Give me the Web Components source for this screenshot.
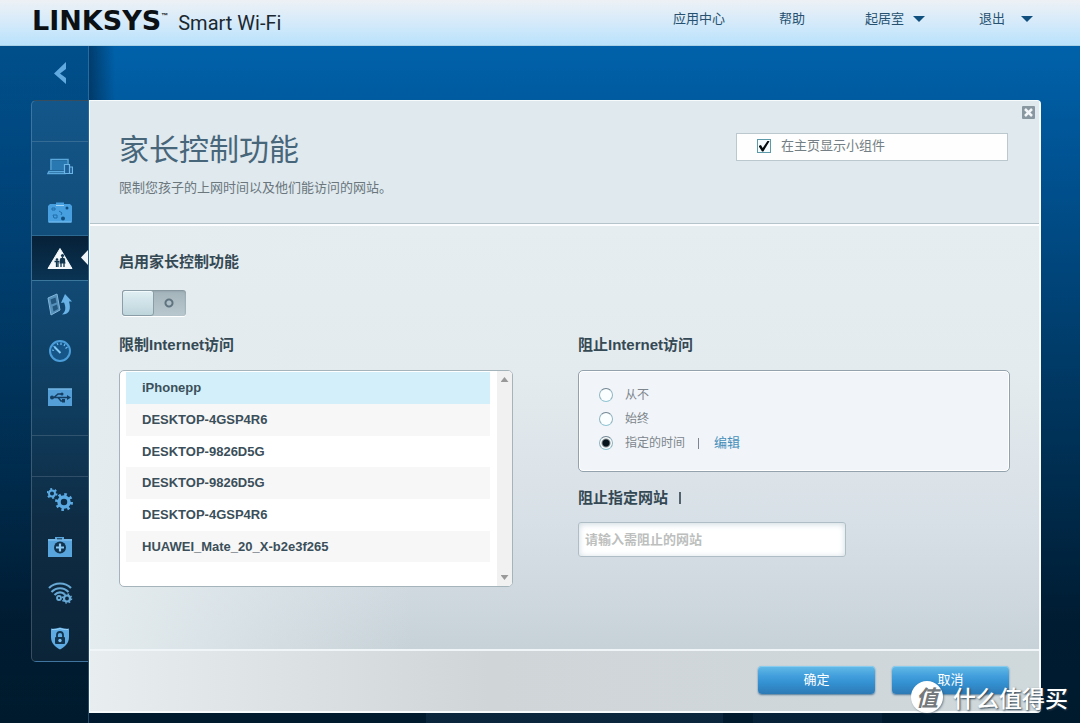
<!DOCTYPE html>
<html lang="zh-CN">
<head>
<meta charset="utf-8">
<title>LINKSYS Smart Wi-Fi</title>
<style>
  body {
    margin: 0;
    font-family: "Liberation Sans", "Noto Sans CJK SC", sans-serif;
    font-size: 13px;
    line-height: 20px;
    color: #3c4f5a;
  }
</style>
</head>
<body>
<smart-wifi-app></smart-wifi-app>

<script>
const define = (name, html, setup) => {
  const template = document.createElement('template');
  template.innerHTML = html;
  customElements.define(name, class extends HTMLElement {
    constructor() {
      super();
      this.attachShadow({ mode: 'open' }).append(template.content.cloneNode(true));
    }
    connectedCallback() {
      if (setup) setup(this, this.shadowRoot);
    }
  });
};

const ICONS = {
  devices: `<path d="M4 16V5.500h17V10M2 17.500h16v2H1z" fill="none" stroke="#5aa8dc" stroke-width="1.500"/><path d="M5 6.500h15V10h-3v6H5z" fill="#2a78b2"/><path d="M17.500 10.500h5v9h-5zM22.500 13h3v6.500h-3z" fill="#1d5f96" stroke="#6ab4e6" stroke-width="1.200"/>`,
  map: `<path d="M9 4V2.500h8V4h6l2 2v16.500H1V6l2-2z" fill="#479fe0"/><path d="M9 5.500h8" stroke="#a6d6f6"/><path d="M2 22h22" stroke="#7cc1f2"/><g fill="#114e80"><circle cx="20" cy="8" r="1.500"/><circle cx="16" cy="18.500" r="2"/></g><g fill="none" stroke="#1f6ca8"><path d="M5 8h3v2H5zM6 15h4v3H7zM12 11l3 2-1 2"/></g>`,
  family: `<path d="M13 2.500L25 22.500H1z" fill="#f4f8fa" stroke="#f4f8fa" stroke-linejoin="round"/><g fill="none" stroke="#123650" stroke-width="1.300"><path d="M15.500 11v5M13 14.500l2.500-2.500 2.500 2.500M14 21v-5h3v5"/><path d="M9.500 14.500V21M7.500 15.500h5M11 16v5"/></g><g fill="#123650"><circle cx="15.500" cy="9.500" r="1.600"/><path d="M13.500 12h4l1 5.500h-6z"/><circle cx="10" cy="13.500" r="1.300"/></g>`,
  media: `<path d="M1 6l9-4 3 16-9 5z" fill="#5590ba" stroke="#82b6da"/><path d="M3.500 7.500l5-2 1 5-5 2zM5.500 14.500l4.500-2 1 4.500-4.500 2.500z" fill="#24587f"/><path d="M15 22.500c8 0 9-6 7-13h3L18 2l-4 9 3-.500c2 5 2 9-2 12z" fill="#68b2e6"/>`,
  speed: `<circle cx="13" cy="13" r="10" fill="#155587" stroke="#4b9dda" stroke-width="2"/><path d="M5 12l2 .500M6.500 8l2 1.500M10 5l1 2M14 4.500V7M18 6l-1 2M20.500 9l-2 1.500" stroke="#6bb8ee" stroke-width="1.200"/><path d="M7.500 9l6 6" stroke="#83c8f5" stroke-width="2"/>`,
  usb: `<path d="M1 4.500h24v17.500H1z" fill="#549fd8"/><path d="M1 4.500h24v1H1z" fill="#85c1eb"/><path d="M4 13.500h17M7 13.500l4-3.500h4M11 13.500l3 3.500h3" fill="none" stroke="#143f63" stroke-width="1.500"/><g fill="#143f63"><circle cx="5" cy="13.500" r="2"/><circle cx="15" cy="10" r="1.500"/><path d="M15 15h3v3.500h-3zM20 11l4 2.500-4 2.500z"/></g>`,
  gears: `<circle cx="5" cy="5.500" r="3" fill="none" stroke="#5caae3" stroke-width="2"/><circle cx="5" cy="5.500" r="4.500" fill="none" stroke="#5caae3" stroke-width="2" stroke-dasharray="2 2.700"/><circle cx="17" cy="14" r="5" fill="none" stroke="#5caae3" stroke-width="3.500"/><circle cx="17" cy="14" r="7.500" fill="none" stroke="#5caae3" stroke-width="3" stroke-dasharray="2.500 3.390"/>`,
  medkit: `<path d="M8 5V3h9v2h8v18H1V5z" fill="#58a4dc"/><path d="M10 5h5" stroke="#163a58" stroke-width="1.500"/><path d="M1 6h24" stroke="#8bc6ef"/><circle cx="13" cy="13.500" r="6" fill="#12334d"/><path d="M13 9.500v8M9 13.500h8" stroke="#8ccaf4" stroke-width="2.200"/>`,
  wifi: `<g fill="none" stroke="#68a9d6" stroke-width="2.200"><path d="M2 8c6-6 16-6 22 0M4.500 12c5-5 12-5 17 0"/><path d="M7.500 15c3-3 7-3 10-1"/></g><g fill="none" stroke="#68a9d6"><circle cx="20" cy="18.500" r="3" stroke-width="2.200"/><circle cx="20" cy="18.500" r="4.500" stroke-width="1.500" stroke-dasharray="1.600 1.940"/><circle cx="12" cy="18" r="2" stroke-width="1.800"/></g>`,
  shield: `<path d="M4 2.500c3 .5 6 0 9-1C16 2.500 19 3 22 2.500V11c0 6-4 10-9 12.500C8 21 4 17 4 11z" fill="#5eaae2"/><path d="M5 3.500c3 .300 5.500 0 8-1C15.500 3.500 18 3.800 21 3.500" fill="none" stroke="#9ad1f5"/><path d="M10 12V9c0-4 6-4 6 0v3" fill="none" stroke="#12334d" stroke-width="1.800"/><rect x="8" y="11" width="10" height="7" rx="1" fill="#12334d"/><circle cx="13" cy="14.500" r="1.700" fill="#7dbfed"/>`
};

/* Top bar */
define('top-link', `
  <style>
    :host { display: block; }
    a { display: flex; align-items: center; justify-content: space-between; color: #27516f; text-decoration: none; }
    i { display: none; width: 12px; height: 6px; background: #10507f; clip-path: polygon(0 0, 100% 0, 50% 100%); }
    :host([menu]) i { display: block; }
  </style>
  <a href="#"><slot></slot><i></i></a>`);

define('top-bar', `
  <style>
    :host {
      box-sizing: border-box; display: flex; justify-content: space-between;
      height: 46px; padding: 0 47px 0 32px;
      background: linear-gradient(#edf1f5, #d5eafa 50%, #b9e2fc);
      border-bottom: 1px solid #a9cfe6;
    }
    .brand { display: flex; align-items: baseline; color: #0b1014; line-height: 42px; white-space: nowrap; }
    .name { font: bold 27px/42px "DejaVu Sans", sans-serif; }
    sup { font: bold 7px/8px "Liberation Sans", sans-serif; align-self: flex-start; margin-top: 12px; }
    .product { font: 20px/42px Roboto, sans-serif; color: #1c2830; margin-left: 10px; }
    nav { display: grid; grid-template-columns: 106px 86px 114px 54px; padding-top: 9px; }
    .place { padding-right: 54px; }
  </style>
  <div class="brand"><span class="name">LINKSYS</span><sup>™</sup><span class="product">Smart Wi-Fi</span></div>
  <nav>
    <top-link>应用中心</top-link>
    <top-link>帮助</top-link>
    <top-link class="place" menu>起居室</top-link>
    <top-link menu>退出</top-link>
  </nav>`);

/* Side navigation */
define('nav-item', `
  <style>
    :host { display: block; position: relative; height: 46px; }
    a { display: flex; align-items: center; justify-content: center; box-sizing: border-box; height: 100%; padding-top: 2px; }
    svg { width: 26px; height: 26px; }
    :host([active]) {
      background: linear-gradient(#062037, #0a3454);
      box-shadow: inset 0 1px #2c6a93, inset 0 -1px #3b769c;
    }
    :host([active])::after {
      content: ""; position: absolute; right: 0; top: 15px; width: 7px; height: 15px;
      background: #f0f5f7; clip-path: polygon(100% 0, 100% 100%, 0 50%);
    }
  </style>
  <a href="#"><svg viewBox="0 0 26 26" aria-hidden="true"></svg></a>`,
  (host, root) => {
    root.querySelector('svg').innerHTML = ICONS[host.getAttribute('icon')];
    root.querySelector('a').setAttribute('aria-label', host.getAttribute('label'));
  });

define('side-nav', `
  <style>
    :host {
      box-sizing: border-box; display: flex; flex-direction: column; padding-left: 31px;
      border-right: 1px solid #5d9cc666;
      background: linear-gradient(#00182e40, #00182e20 50%, #00182e00);
    }
    .back {
      display: flex; align-items: center; justify-content: center; height: 54px; padding: 0;
      border: 0; background: none;
    }
    .back svg { width: 14px; height: 24px; }
    .panel {
      border: 1px solid #ffffff30; border-right: 0; border-radius: 5px 0 0 5px;
      background: linear-gradient(#135689, #114a75 32%, #0f3b5c 56%, #0e2c44 75%, #0b2438);
    }
    .gap { height: 40px; }
    .group { border-top: 1px solid #ffffff24; }
    .main { padding: 1px 0 16px; border-bottom: 1px solid #ffffff24; }
  </style>
  <button class="back" aria-label="返回"><svg viewBox="0 0 14 24"><path d="M13 1v7l-6 4.500 6 4.500v6L1 12.500z" fill="#61aae0"/></svg></button>
  <nav class="panel">
    <div class="gap"></div>
    <div class="group main">
      <nav-item icon="devices" label="设备列表"></nav-item>
      <nav-item icon="map" label="访客访问"></nav-item>
      <nav-item icon="family" label="家长控制功能" active></nav-item>
      <nav-item icon="media" label="媒体优先级"></nav-item>
      <nav-item icon="speed" label="速度测试"></nav-item>
      <nav-item icon="usb" label="外部存储"></nav-item>
    </div>
    <div class="gap"></div>
    <div class="group">
      <nav-item icon="gears" label="连接"></nav-item>
      <nav-item icon="medkit" label="故障排除"></nav-item>
      <nav-item icon="wifi" label="无线"></nav-item>
      <nav-item icon="shield" label="安全"></nav-item>
    </div>
  </nav>`);

/* Form parts */
define('section-title', `
  <style>
    :host { display: block; }
    h2 { margin: 0; font-size: 15px; line-height: 20px; font-weight: bold; color: #354954; }
  </style>
  <h2><slot></slot></h2>`);

define('toggle-switch', `
  <style>
    :host { display: block; height: 26px; padding-left: 3px; }
    input {
      appearance: none; display: block; box-sizing: border-box; width: 64px; height: 26px; margin: 0;
      border-radius: 3px; box-shadow: inset 0 1px 2px #7e8f98, 0 1px #fff;
      background: radial-gradient(circle at 47px 13px, #b0c0c8 2px, #60747f 3px 4px, transparent 5px), linear-gradient(#a3b3ba, #b9c8ce);
    }
    input::before {
      content: ""; display: block; box-sizing: border-box; width: 32px; height: 26px;
      border: 1px solid #8b9da6; border-radius: 3px; background: linear-gradient(#e0eff3, #bed5dc);
      box-shadow: inset 0 1px #f3fafc;
    }
  </style>
  <input type="checkbox" role="switch" aria-label="启用家长控制功能">`);

define('device-list', `
  <style>
    :host {
      box-sizing: border-box; display: flex; height: 217px; padding: 1px 0 0 6px; background: #fff;
      border: 1px solid #a5b4bb; border-radius: 5px; overflow: hidden;
    }
    ul { flex: 1; margin: 0 7px 0 0; padding: 0; list-style: none; }
    li:nth-child(even) { background: #f7f7f7; }
    li.on { background: #d3eff9; }
    button {
      display: block; width: 100%; height: 32px; padding: 0 16px; border: 0; background: none;
      font: bold 13px/30px "Liberation Sans", sans-serif; text-align: left; color: #3b4f5a;
    }
    li:nth-child(3n) button { height: 31px; }
    .scroll {
      display: flex; flex-direction: column; justify-content: space-between; align-items: center;
      width: 15px; margin-top: -1px; padding: 6px 0; box-sizing: border-box; background: #f1f1f1;
    }
    .scroll i { width: 8px; height: 5px; background: #999; clip-path: polygon(50% 0, 100% 100%, 0 100%); }
    .scroll i:last-child { clip-path: polygon(0 0, 100% 0, 50% 100%); }
  </style>
  <ul></ul>
  <div class="scroll" aria-hidden="true"><i></i><i></i></div>`,
  (host, root) => {
    const list = root.querySelector('ul');
    const names = ['iPhonepp', 'DESKTOP-4GSP4R6', 'DESKTOP-9826D5G', 'DESKTOP-9826D5G', 'DESKTOP-4GSP4R6', 'HUAWEI_Mate_20_X-b2e3f265'];
    list.replaceChildren(...names.map((name, i) => {
      const li = document.createElement('li');
      const button = document.createElement('button');
      button.textContent = name;
      button.onclick = () => {
        list.querySelector('.on').classList.remove('on');
        li.classList.add('on');
      };
      if (i === 0) li.className = 'on';
      li.append(button);
      return li;
    }));
  });

define('access-options', `
  <style>
    :host {
      box-sizing: border-box; display: block; height: 102px; padding: 12px 20px;
      border: 1px solid #93a2ac; border-radius: 5px; background: #f1f5f9; box-shadow: inset 0 0 0 1px #fff;
      font-size: 12px; color: #7d868c;
    }
    .row { display: flex; align-items: center; height: 24px; }
    label { display: flex; align-items: center; gap: 12px; }
    input {
      appearance: none; box-sizing: border-box; width: 14px; height: 14px; margin: 0; border-radius: 50%;
      border: 1px solid; border-color: #728591 #8fb4bf #8fc4d0; background: #fafeff;
    }
    input:checked { background: radial-gradient(circle at 50% 50%, #06141d 3px, #fafeff 5px); }
    .bar { width: 1px; height: 11px; margin: 0 15px 0 13px; background: #7d868c; }
    a { color: #468fba; font-size: 13px; text-decoration: none; }
  </style>
  <div class="row"><label><input type="radio" name="when">从不</label></div>
  <div class="row"><label><input type="radio" name="when">始终</label></div>
  <div class="row"><label><input type="radio" name="when" checked>指定的时间</label><span class="bar"></span><a href="#">编辑</a></div>`);

define('site-field', `
  <style>
    :host { display: block; max-width: 268px; }
    input {
      display: block; box-sizing: border-box; width: 100%; height: 35px; padding: 0 6px 1px;
      border: 1px solid #aebdc6; border-radius: 3px; background: #fff; box-shadow: inset 0 1px 6px #ccd9df;
      font: bold 13px/20px "Liberation Sans", "Noto Sans CJK SC", sans-serif; color: #3b4f5a;
    }
    input::placeholder { color: #bdbfbe; opacity: 1; }
  </style>
  <input type="text" placeholder="请输入需阻止的网站" aria-label="阻止指定网站">`);

define('action-button', `
  <style>
    :host { display: block; width: 117px; }
    button {
      display: block; width: 100%; height: 28px; padding: 0; border: 0; border-radius: 4px;
      background: linear-gradient(#63bbe7, #439fdc 35%, #3491d2 60%, #2d7ab5);
      box-shadow: 0 1px 2px #50799a, inset 0 1px #88cdef;
      font: 13px/26px "Liberation Sans", "Noto Sans CJK SC", sans-serif; color: #fff;
    }
  </style>
  <button><slot></slot></button>`);

/* Settings panel */
define('parental-panel', `
  <style>
    :host {
      position: relative; box-sizing: border-box; display: flex; flex-direction: column;
      border: 1px solid #f8fbfc; border-width: 1px 2px 2px 1px; border-radius: 0 4px 4px 0;
      background: #e4ecef;
    }
    header {
      display: flex; justify-content: space-between; align-items: flex-start; gap: 20px;
      height: 123px; padding: 0 31px 0 29px; box-sizing: border-box;
      background: #dfe9ee; border-bottom: 1px solid #b5c3cb;
    }
    h1 { margin: 31px 0 0; font-size: 30px; line-height: 36px; font-weight: 400; color: #47667a; }
    p { margin: 10px 0 0; color: #6b767d; }
    .close {
      position: absolute; top: 5px; right: 4px; display: grid; place-items: center; width: 13px; height: 13px;
      padding: 0; border: 0; border-radius: 1px; background: #8997a0;
    }
    .close svg { width: 9px; height: 9px; }
    .widget {
      display: flex; align-items: center; gap: 10px; box-sizing: border-box; width: 272px; height: 28px;
      margin-top: 32px; padding: 0 20px 2px; border: 1px solid #bbc9cf; background: #fdfefd; color: #747f85;
    }
    .widget input {
      appearance: none; box-sizing: border-box; width: 14px; height: 14px; margin: 0; border: 1px solid #5d9aa9;
      background: #f4fcfd; display: grid; place-items: center;
    }
    .widget input:checked::before {
      content: ""; width: 11px; height: 11px; background: #050c10;
      clip-path: polygon(0 50%, 22% 42%, 38% 68%, 84% 0, 100% 6%, 44% 100%, 32% 100%);
    }
    main {
      flex: 1; padding: 26px 29px 20px; border-top: 2px solid #fbfdfe;
      background:
        linear-gradient(to right, #e4ecef, #e4ecef00 34%),
        linear-gradient(#e6edf0, #e3ebee 35%, #d8e0e7 70%, #c7d2d8);
    }
    toggle-switch { margin: 18px 0 19px; }
    .columns { display: grid; grid-template-columns: minmax(0, 394fr) minmax(0, 432fr); gap: 65px; }
    device-list, access-options { margin-top: 15px; }
    .sites { display: flex; align-items: center; gap: 11px; margin: 16px 0 14px; }
    .sites i { width: 2px; height: 12px; background: #52636d; }
    footer {
      display: flex; justify-content: flex-end; gap: 17px; box-sizing: border-box; height: 62px;
      padding: 15px 30px 0; border-top: 2px solid #f0f5f7;
      background: linear-gradient(to right, #e8eef0, #d0d5d8 42%, #cfd8db);
    }
  </style>
  <header>
    <div>
      <h1>家长控制功能</h1>
      <p>限制您孩子的上网时间以及他们能访问的网站。</p>
    </div>
    <label class="widget"><input type="checkbox" checked>在主页显示小组件</label>
  </header>
  <button class="close" aria-label="关闭"><svg viewBox="0 0 9 9"><path d="M1 1l7 7M8 1L1 8" stroke="#f2f6f8" stroke-width="2.500"/></svg></button>
  <main>
    <section-title>启用家长控制功能</section-title>
    <toggle-switch></toggle-switch>
    <div class="columns">
      <section>
        <section-title>限制Internet访问</section-title>
        <device-list></device-list>
      </section>
      <section>
        <section-title>阻止Internet访问</section-title>
        <access-options></access-options>
        <div class="sites"><section-title>阻止指定网站</section-title><i></i></div>
        <site-field></site-field>
      </section>
    </div>
  </main>
  <footer>
    <action-button>确定</action-button>
    <action-button>取消</action-button>
  </footer>`);

define('site-watermark', `
  <style>
    :host {
      position: absolute; right: 12px; bottom: 8px; display: flex; align-items: center; gap: 10px;
      color: #fff; font: 500 23px/36px "Noto Sans CJK SC", sans-serif; pointer-events: none;
      text-shadow: 1px 1px 2px #2c4150;
    }
    b {
      width: 32px; height: 32px; border-radius: 50%; background: #fff; color: #74797c; text-shadow: none;
      font: italic bold 22px/31px "Noto Sans CJK SC", sans-serif; text-align: center;
      box-shadow: 1px 1px 2px #2c415080;
    }
  </style>
  <b>值</b><span>什么值得买</span>`);

define('smart-wifi-app', `
  <style>
    :host {
      position: relative; display: flex; flex-direction: column; min-height: 100vh;
      background: linear-gradient(#0062ab 6%, #005190 24%, #00365f 55%, #001c32 86%, #001a2d);
    }
    .stage { flex: 1; display: grid; grid-template-columns: 89px minmax(0, 1fr); }
    .area {
      display: flex; flex-direction: column; padding: 54px 39px 10px 0;
      background:
        linear-gradient(to right, transparent 34%, #12304a90 34% 64%, transparent 64% 67%, #12304a60 67% 80%, transparent 80%) bottom / 100% 10px no-repeat,
        linear-gradient(to right, #00183080, transparent 26px);
    }
    parental-panel { flex: 1; }
  </style>
  <top-bar></top-bar>
  <div class="stage">
    <side-nav></side-nav>
    <div class="area"><parental-panel></parental-panel></div>
  </div>
  <site-watermark></site-watermark>`);
</script>
</body>
</html>
